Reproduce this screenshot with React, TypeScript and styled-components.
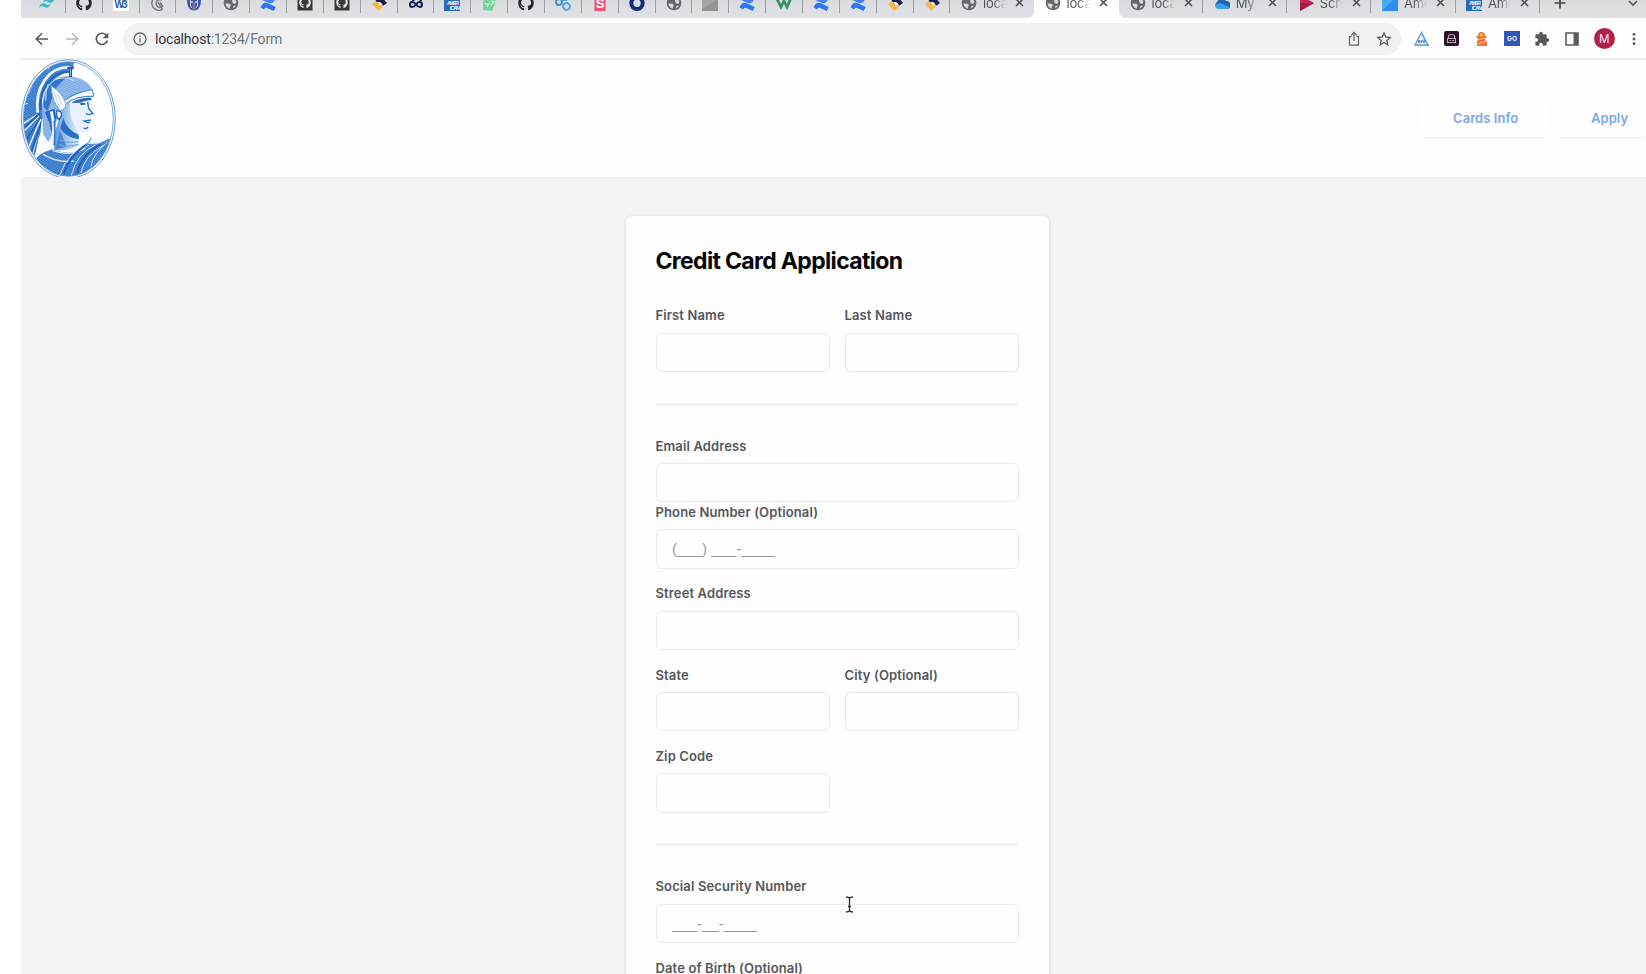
import React from 'react';
import styled, { createGlobalStyle, css } from 'styled-components';
import { FaGithub } from 'react-icons/fa';

const GlobalStyle = createGlobalStyle`
  * { box-sizing: border-box; }
  body { margin: 0; background: #fff; overflow: hidden; }
`;

const Window = styled.div`
  position: relative;
  width: 1646px;
  height: 974px;
  padding-left: 21px;
  display: flex;
  flex-direction: column;
  overflow: hidden;
  background: #fff;
  font-family: Inter, 'Liberation Sans', sans-serif;
`;

/* ---------- browser chrome ---------- */

const TabStrip = styled.div`
  display: flex;
  height: 18px;
  flex: none;
  background: #fdfdfe;
`;

const TabGroup = styled.div<{ $side: 'left' | 'right' }>`
  display: flex;
  align-items: flex-end;
  height: 18px;
  overflow: hidden;
  background: linear-gradient(#d9dbdf, #e0e1e5);
  ${(p) =>
    p.$side === 'left'
      ? css`width: 1013px; padding-left: 8px; border-bottom-right-radius: 7px;`
      : css`flex: 1; border-bottom-left-radius: 7px;`}
`;

const ActiveSlot = styled.div`
  display: flex;
  align-items: flex-end;
  height: 18px;
  width: 85px;
  overflow: hidden;
`;

const TabBase = styled.div<{ $divider?: boolean }>`
  display: flex;
  align-items: center;
  flex: none;
  height: 31px;
  &::after {
    content: '';
    width: 1px;
    height: 20px;
    margin-left: auto;
    background: ${(p) => (p.$divider === false ? 'transparent' : '#9b9ea3')};
  }
`;

const PinnedTab = styled(TabBase)`
  width: 36.87px;
  padding-left: 10px;
`;

const WideTab = styled(TabBase)`
  width: 84.15px;
  padding-left: 10.5px;
`;

const TabTitle = styled.span`
  width: 24px;
  margin-left: 6px;
  overflow: hidden;
  white-space: nowrap;
  font: 400 13px/18px Inter, sans-serif;
  letter-spacing: -0.2px;
  color: #55585c;
  mask-image: linear-gradient(90deg, #000 45%, transparent 95%);
`;

const CloseIcon = styled.svg`
  width: 9px;
  height: 9px;
  margin-left: 8px;
`;

const NewTab = styled.div`
  display: flex;
  flex: 1;
  height: 31px;
  align-items: center;
  justify-content: space-between;
  padding: 0 8px 0 14px;
`;

const Toolbar = styled.div`
  display: flex;
  align-items: center;
  height: 42px;
  flex: none;
  padding: 1px 6px 0 13px;
  border-bottom: 2px solid #ebecee;
  background: #fdfdfe;
`;

const NavIcons = styled.div`
  display: flex;
  align-items: center;
  gap: 14px;
  width: 89px;
  svg { width: 16px; height: 16px; flex: none; }
`;

const AddressBar = styled.div`
  display: flex;
  align-items: center;
  width: 1278px;
  height: 32px;
  padding: 0 9px 0 10px;
  border-radius: 16px;
  background: #f0f1f3;
`;

const Url = styled.span`
  flex: 1;
  margin-left: 8px;
  font: 400 14px/20px Roboto, sans-serif;
  letter-spacing: -0.18px;
  color: #707377;
  b { font-weight: 400; color: #313438; }
`;

const BarActions = styled.div`
  display: flex;
  align-items: center;
  gap: 14px;
`;

const Extensions = styled.div`
  display: flex;
  align-items: center;
  flex: 1;
  gap: 14.7px;
  padding-left: 12.5px;
  svg { flex: none; }
`;

const Avatar = styled.div`
  display: grid;
  place-items: center;
  width: 21px;
  height: 21px;
  border-radius: 50%;
  background: #b0214d;
  color: #f7dfe7;
  font: 400 12px/1 Roboto, sans-serif;
`;

/* ---------- site ---------- */

const SiteHeader = styled.header`
  display: flex;
  justify-content: space-between;
  height: 117px;
  flex: none;
  background: #fdfdfd;
`;

const Crest = styled.svg`
  width: 98px;
  height: 120px;
  margin: -1.5px 0 0 -1px;
  flex: none;
`;

const Nav = styled.nav`
  display: flex;
  align-items: center;
  gap: 10px;
  height: 117px;
`;

const NavButton = styled.button<{ $w: number }>`
  width: ${(p) => p.$w}px;
  height: 36px;
  padding: 0 0 2px 33px;
  border: 0;
  border-radius: 4px;
  text-align: left;
  background: #fefefe;
  box-shadow: 0 1px 2px rgba(0, 0, 0, 0.035);
  color: #7aa6e9;
  font: 600 13px/18px Inter, sans-serif;
  letter-spacing: 0.05px;
`;

const Page = styled.main`
  flex: 1;
  min-height: 0;
  display: flex;
  justify-content: center;
  align-items: flex-start;
  padding: 39px 0 0 7px;
  background: #f1f3f5;
`;

const Card = styled.form`
  width: 423px;
  height: 1100px;
  flex: none;
  padding: 30px 30px 0;
  border-radius: 6px;
  background: #fdfdfe;
  box-shadow: 0 1px 4px rgba(0, 0, 0, 0.12);
`;

const Title = styled.h1`
  margin: 0 0 31.3px;
  color: #050505;
  font: 700 23px/30px Inter, sans-serif;
  letter-spacing: -0.66px;
  white-space: nowrap;
`;

const Row = styled.div<{ $after?: number }>`
  display: grid;
  grid-template-columns: 1fr 1fr;
  column-gap: 15px;
  margin-bottom: ${(p) => p.$after ?? 16.7}px;
`;

const Field = styled.label<{ $full?: boolean }>`
  display: flex;
  flex-direction: column;
  grid-column: ${(p) => (p.$full ? '1 / -1' : 'auto')};
`;

const LabelText = styled.span`
  height: 17px;
  margin-bottom: 8.4px;
  color: #55575b;
  font: 600 13px/17px Inter, sans-serif;
  letter-spacing: 0.13px;
  white-space: nowrap;
`;

const Input = styled.input`
  width: 100%;
  height: 39.3px;
  padding: 0 15.5px;
  border: 1px solid #e9eaeb;
  border-radius: 6px;
  outline: none;
  background: #fefefe;
  font: 400 15px/20px 'Liberation Sans', sans-serif;
  &::placeholder { color: #96989a; opacity: 1; }
`;

const Divider = styled.hr`
  height: 3px;
  margin: 0 0 32px;
  border: 0;
  border-radius: 2px;
  background: #f1f1f2;
`;

const TextCursor = styled.svg`
  position: absolute;
  left: 845px;
  top: 896px;
  width: 9px;
  height: 17px;
`;

/* ---------- icons ---------- */

const icons: Record<string, React.ReactNode> = {
  wave: (
    <g fill="#35b8cb">
      <path d="M4 7.500Q6 2.500 9.500 3.500C12 4.500 13 6.500 16 3 14 8.500 11.500 8 10 7.300 7.500 6 6.500 5.500 4 7.500z" />
      <path d="M0 12.500Q2 7.500 5.500 8.500C8 9.500 9 11.500 12 8 10 13.500 7.500 13 6 12.300 3.500 11 2.500 10.500 0 12.500z" />
    </g>
  ),
  github: <FaGithub size={16} color="#25282c" />,
  w3: (
    <g>
      <rect width="16" height="16" fill="#fbfcfe" />
      <text x="8" y="12.500" textAnchor="middle" fontFamily="Liberation Sans" fontSize="10" fontWeight="700" fill="#275f9e" textLength="13">W3</text>
    </g>
  ),
  swirl: (
    <g fill="none" stroke="#777b80" strokeWidth="1.500">
      <path d="M12 2A7 7 0 1 0 13 14" />
      <path d="M12 5A4 4 0 1 0 12 12" />
      <path d="M8 7l4 7M10 7l3 5" />
    </g>
  ),
  elephant: (
    <g>
      <path d="M1 5Q1 0 8 1t7 4q0 5-2 8l-2 2H5l-2-2Q1 10 1 5z" fill="#3b55ad" />
      <path d="M4.500 4v7l1.500 2M11.500 4v7L10 13" stroke="#c9d2ed" fill="none" />
      <path d="M7 7h2l1 8.500H6z" fill="#77777f" />
      <path d="M5 7h2M9 7h2" stroke="#fff" />
    </g>
  ),
  globe: (
    <g>
      <circle cx="8" cy="8" r="7.300" fill="#65696d" />
      <path d="M2.500 8.500l4 .2 1.500 1.500-1 1.300-.3 2.200C4.500 13 2.800 11.500 2.500 8.500z" fill="#d8dadd" />
      <path d="M9 4c2.500 0 4 1.200 4.500 3L12 9 9.500 8z" fill="#d8dadd" />
      <path d="M10.500 11l2.500-.5-1.500 2-1.500.5z" fill="#d8dadd" />
    </g>
  ),
  confluence: (
    <g>
      <path d="M.5 12.300C3 7.500 5 6.800 9 8.800l6.700 3.100-2 4.100-6-2.800c-2-.9-2.700-.5-3.600 1.300z" fill="#2f75ef" />
      <path d="M15.500 3.700C13 8.500 11 9.200 7 7.200L.3 4.100 2.300 0l6 2.800c2 .9 2.700.5 3.600-1.300z" fill="#3f83f8" />
    </g>
  ),
  darkhub: (
    <g>
      <rect x=".5" width="15" height="15.500" fill="#35383b" />
      <FaGithub x={2} y={1.500} size={12} color="#e0e1e3" />
    </g>
  ),
  diamond: (
    <g>
      <path d="M1 9l5-4 8 4-6.500 7z" fill="#f3b847" />
      <path d="M3 3l6-3 7 8-3.500 2.500L10 8l-2 2z" fill="#16204d" />
      <path d="M6 7l3 0 2 2-2 2z" fill="#fff" />
    </g>
  ),
  infinity: (
    <path d="M8 9.500C5.500 6 2 6.500 2 9.500s3.500 3.500 6 0 6-3 6 0-3.500 3.500-6 0M5 6c1-3 7-4 8 0" fill="none" stroke="#151c50" strokeWidth="2.100" />
  ),
  amex: (
    <g>
      <rect width="16" height="16" fill="#286bb8" />
      <text x="9" y="10" textAnchor="middle" fontFamily="Liberation Sans" fontWeight="700" fontSize="5.500" fill="#eef5ff" textLength="12">AMER</text>
      <text x="11" y="14.500" textAnchor="middle" fontFamily="Liberation Sans" fontWeight="700" fontSize="5.500" fill="#eef5ff" textLength="10">ICAN</text>
    </g>
  ),
  leaf: (
    <g>
      <path d="M4 0h11l-1 9-3 7-9-1 0-8z" fill="#73d795" />
      <path d="M4 9h4l-2 3M10 6l3 1-3 3" fill="none" stroke="#ddf6e4" strokeWidth="1.100" />
    </g>
  ),
  loops: (
    <g fill="none" strokeWidth="2">
      <circle cx="4" cy="7" r="3" stroke="#4b8dc8" />
      <circle cx="11.500" cy="11.500" r="3.400" stroke="#57a6dc" />
      <path d="M6.500 8L9 10M7 5h5" stroke="#57a6dc" />
    </g>
  ),
  story: (
    <g>
      <path d="M2.500 0h11v16h-11z" fill="#e5527b" />
      <text x="8" y="13" textAnchor="middle" fontFamily="Liberation Sans" fontSize="13" fontWeight="700" fill="#fff">S</text>
    </g>
  ),
  ring: <circle cx="8" cy="8.200" r="5.700" fill="none" stroke="#142d79" strokeWidth="4" />,
  gray: (
    <g>
      <rect width="16" height="16" fill="#929497" />
      <path d="M0 0h16v4L0 14z" fill="#a4a5a8" />
    </g>
  ),
  w: <path d="M1 4l4 8 3-6 3 6 4-9" fill="none" stroke="#34915d" strokeWidth="2.700" />,
  cloud: (
    <g>
      <path d="M4 14a4 4 0 0 1-1-7 5 5 0 0 1 9-1 4 4 0 0 1 1 8z" fill="#1d67bd" />
      <path d="M1 10l5-2 9 4q0 2-3 2H4q-3-1-3-4z" fill="#3ba0e8" />
    </g>
  ),
  play: (
    <g>
      <path d="M2 0l14 8L2 16z" fill="#c22752" />
      <path d="M2 8h14L2 16z" fill="#a41c43" />
    </g>
  ),
  blue: (
    <g>
      <rect width="16" height="16" fill="#2f8bf4" />
      <path d="M0 0h16L0 16z" fill="#49aaf9" />
    </g>
  ),
};

const Favicon = ({ name }: { name: string }) => (
  <svg width="16" height="16" viewBox="0 0 16 16">{icons[name]}</svg>
);

const Close = () => (
  <CloseIcon viewBox="0 0 9 9">
    <path d="M1 1l7 7M8 1L1 8" stroke="#484b4f" strokeWidth="1.500" />
  </CloseIcon>
);

const pinned = [
  'wave', 'github', 'w3', 'swirl', 'elephant', 'globe', 'confluence', 'darkhub', 'darkhub',
  'diamond', 'infinity', 'amex', 'leaf', 'github', 'loops', 'story', 'ring', 'globe', 'gray',
  'confluence', 'w', 'confluence', 'confluence', 'diamond', 'diamond',
];

const Tab = ({ icon, title, divider }: { icon: string; title: string; divider?: boolean }) => (
  <WideTab $divider={divider}>
    <Favicon name={icon} />
    <TabTitle>{title}</TabTitle>
    <Close />
  </WideTab>
);

const CenturionCrest = () => (
  <Crest viewBox="33 25 294 360">
    <defs>
      <clipPath id="oval"><ellipse cx="178" cy="205" rx="134" ry="171" /></clipPath>
      <pattern id="hatch" width="6" height="6" patternUnits="userSpaceOnUse" patternTransform="rotate(35)">
        <rect width="6" height="6" fill="#2f74ca" />
        <path d="M0 1h6" stroke="#8db8e8" strokeWidth="1.500" />
      </pattern>
      <pattern id="shade" width="5" height="5" patternUnits="userSpaceOnUse" patternTransform="rotate(-20)">
        <rect width="5" height="5" fill="#b4d0f0" />
        <path d="M0 2h5" stroke="#4a8ad6" strokeWidth="2" />
      </pattern>
      <linearGradient id="cheek" x1="0" x2="1" y1="0" y2="0">
        <stop offset="0" stopColor="#5c98de" />
        <stop offset="1" stopColor="#f2f8fe" />
      </linearGradient>
    </defs>
    <ellipse cx="178" cy="205" rx="141" ry="178" fill="#fdfeff" stroke="#4b86cd" strokeWidth="2.500" />
    <ellipse cx="178" cy="205" rx="135" ry="172" fill="none" stroke="#78a8df" strokeWidth="3" />
    <g clipPath="url(#oval)">
      <path d="M196 30C95 25 38 115 38 214l4 85 35 22 12-58 21-55-13-63q18-62 94-88z" fill="url(#hatch)" />
      <path d="M100 62L90 76M68 107L58 130M57 159L44 160M126 42l-9 14" stroke="#d3e4f6" strokeWidth="3" />
      <path d="M185 50C118 46 77 111 86 186" fill="none" stroke="#f5faff" strokeWidth="8" />
      <path d="M181 63C125 64 93 112 94 178" fill="none" stroke="#2467b6" strokeWidth="6" />
      <path d="M88 190L44 218M90 195L42 245M92 199L47 274M95 204L57 295M98 208L70 312" stroke="#f5faff" strokeWidth="4" />
      <path d="M93 188L47 230M94 199L52 267M100 207L67 306" stroke="#1e62b6" strokeWidth="6" />
      <path d="M98 205l22 0-5 42q-2 30 17 52l-33 7-26 12q24-28 21-63z" fill="#f8fcff" />
      <path d="M100 190C97 105 133 77 179 76q61 8 71 44l-65 20-32 38-20 67-15 30-16-25z" fill="url(#shade)" />
      <path d="M104 170C104 108 135 80 178 78q-40 22-52 74l-10 30z" fill="#3277cd" />
      <path d="M118 100q-10 22-8 50M138 86q31-10 58 4" fill="none" stroke="#cfe2f6" strokeWidth="3" />
      <path d="M177 48h19v4l-7 4v23h-9V56l-7-4z" fill="#225fae" />
      <path d="M184 56v20" stroke="#c8ddf3" strokeWidth="2" />
      {/* face in profile, neck and jaw shadow */}
      <path d="M165 150l30-10 52-2 1 17 1 12 7 22q0 4-9 5l-1 11 1 5-4 6 1 10q-2 15-15 18l-22 2 4 40q-30 16-78 10l8-62 9-40z" fill="#e9f2fc" />
      <path d="M163 158l22-14q-8 42 9 76l22 26-9 4 4 36q-30 16-76 12l5-60z" fill="url(#cheek)" />
      <path d="M163 202q8 34 46 50l1 14q-38-4-56-33z" fill="#2b6dc2" />
      <path d="M152 240l22 48-34 8z" fill="#4685cf" />
      <path d="M154 268q26 12 54 4M150 282q30 10 60-2" fill="none" stroke="#6fa4e0" strokeWidth="4" />
      <path d="M163 151q38-27 87-34l4 20q-52-3-84 23z" fill="#f3f9ff" stroke="#3c7ac7" strokeWidth="3" />
      <path d="M180 119q26-14 56-10l8 9q-40 4-70 20z" fill="url(#shade)" />
      <path d="M192 153q24-13 54-12l2 7-16 2-20 6-24 1z" fill="#2a68b8" />
      <path d="M212 158q10-4 20 3l-16 3z" fill="#2463b2" />
      <path d="M236 154l3 20 13 15-14 3-8-3M246 208l-21 3 10 5 8-1M224 232q8 4 13-3" fill="none" stroke="#2d6dbd" strokeWidth="4" />
      {/* wing and cheek guard */}
      <path d="M126 105q31 19 45 53-1 19-17 22-25-26-28-75z" fill="#f7fbff" stroke="#70a5df" strokeWidth="3" />
      <path d="M135 124l17 46M146 130l15 36" stroke="#bad5ef" strokeWidth="3" />
      <path d="M107 184l29-10 6 30-15 42-6-30z" fill="#296bbf" />
      <path d="M143 181q15-3 15 13l-7 13q-11-6-8-26z" fill="#e5f1fc" stroke="#2768b4" strokeWidth="4" />
      <path d="M127 182q12 49 3 100" fill="none" stroke="#e4f0fc" strokeWidth="9" />
      <path d="M136 210q4 40 0 74" fill="none" stroke="#3275c8" strokeWidth="5" />
      {/* cloak */}
      <path d="M70 338q16-30 60-42 52 20 90 0l50-30 46-2-12 51-41 62-78 16-65-20z" fill="url(#hatch)" />
      <path d="M130 299q51 20 98-6M103 311q43 27 91 20" fill="none" stroke="#d4e7fa" strokeWidth="4" />
      <path d="M249 274q-73 27-96 98M266 279q-64 28-79 95M283 284q-59 34-67 83M296 274q-46 38-50 73" fill="none" stroke="#cce1f8" strokeWidth="3" />
      <path d="M254 271q-66 29-90 98M276 280q-57 30-72 88" fill="none" stroke="#1e62b5" strokeWidth="6" />
      <path d="M246 262q-4 14-14 20l36-2 32-14" fill="#eff7ff" stroke="#478bd2" strokeWidth="3" />
    </g>
  </Crest>
);

export default function App() {
  return (
    <Window>
      <GlobalStyle />
      <TabStrip>
        <TabGroup $side="left">
          {pinned.map((name, i) => (
            <PinnedTab key={i}><Favicon name={name} /></PinnedTab>
          ))}
          <Tab icon="globe" title="localhost" divider={false} />
        </TabGroup>
        <ActiveSlot><Tab icon="globe" title="localhost" divider={false} /></ActiveSlot>
        <TabGroup $side="right">
          <Tab icon="globe" title="localhost" />
          <Tab icon="cloud" title="My" />
          <Tab icon="play" title="Scree" />
          <Tab icon="blue" title="Amer" />
          <Tab icon="amex" title="Amer" />
          <NewTab>
            <svg width="12" height="12" viewBox="0 0 12 12"><path d="M6 .5v11M.5 6h11" stroke="#414447" strokeWidth="1.700" /></svg>
            <svg width="10" height="10" viewBox="0 0 10 10"><path d="M1 3l4 4 4-4" stroke="#55585c" strokeWidth="1.600" fill="none" /></svg>
          </NewTab>
        </TabGroup>
      </TabStrip>

      <Toolbar>
        <NavIcons>
          <svg viewBox="0 0 16 16"><path d="M14 8H2.500M8 2.300L2.300 8 8 13.700" stroke="#55585c" strokeWidth="1.600" fill="none" /></svg>
          <svg viewBox="0 0 16 16"><path d="M2 8h11.500M8 2.300L13.700 8 8 13.700" stroke="#b5b7ba" strokeWidth="1.500" fill="none" /></svg>
          <svg viewBox="0 0 16 16"><path d="M13.300 9.500A5.600 5.600 0 1 1 12 4l1.500 1.600" stroke="#55585c" strokeWidth="1.700" fill="none" /><path d="M14.300 1.500v5.700H8.600z" fill="#55585c" /></svg>
        </NavIcons>
        <AddressBar>
          <svg width="14" height="14" viewBox="0 0 14 14"><circle cx="7" cy="7" r="6" fill="none" stroke="#65686c" strokeWidth="1.300" /><path d="M7 6.200v4M7 3.500v1.400" stroke="#65686c" strokeWidth="1.400" /></svg>
          <Url><b>localhost</b>:1234/Form</Url>
          <BarActions>
            <svg width="16" height="16" viewBox="0 0 16 16"><path d="M5.500 5.700H3.500v8.500h9V5.700h-2M8 10V1.800M5.200 4.300L8 1.500l2.800 2.800" fill="none" stroke="#66696d" strokeWidth="1.300" /></svg>
            <svg width="16" height="16" viewBox="0 0 16 16"><path d="M8 2l1.800 4 4.400.5-3.300 2.900.9 4.300L8 11.500l-3.800 2.200.9-4.300L1.800 6.500 6.200 6z" fill="none" stroke="#55585c" strokeWidth="1.300" /></svg>
          </BarActions>
        </AddressBar>
        <Extensions>
          <svg width="16" height="16" viewBox="0 0 16 16"><path d="M7.500 1.500L1 14h13z" fill="#f6fafe" stroke="#5796d1" strokeWidth="1.300" /><path d="M7.500 4l4.500 8" stroke="#8ab6e0" /><path d="M4 10.500h7" stroke="#427fbb" strokeWidth="2.500" strokeDasharray="2 .6" /><circle cx="14" cy="14" r="1" fill="#5796d1" /></svg>
          <svg width="15" height="15" viewBox="0 0 15 15"><rect width="15" height="15" rx="2" fill="#291027" /><path d="M4.500 7V5q0-1.500 3-1.500t3 1.500v2M3.500 7.500h8v4h-8zM5.500 9.500h1.500M8 9.500h2" fill="none" stroke="#bda7bc" strokeWidth="1.100" /></svg>
          <svg width="15" height="16" viewBox="0 0 15 16"><path d="M4 5Q4 1 7.500 1T11 5h1.500v2H11l.5 3 1.500 1v4H3v-4l1-4H2.500V5z" fill="#ed7138" /><path d="M3.500 13l9-3M4 9l7-2" stroke="#f9bd86" strokeWidth="1.200" /><circle cx="7.500" cy="4" r="1.500" fill="#f7d36e" /></svg>
          <svg width="16" height="15" viewBox="0 0 16 15"><rect width="16" height="15" fill="#2f58b9" /><text x="8" y="9.700" textAnchor="middle" fontFamily="Inter" fontSize="6.500" fontWeight="700" fill="#e8effc">GO</text></svg>
          <svg width="16" height="16" viewBox="0 0 24 24"><path fill="#56595d" d="M20.500 11H19V7a2 2 0 0 0-2-2h-4V3.500a2.500 2.500 0 0 0-5 0V5H4a2 2 0 0 0-2 2v3.800h1.500a2.700 2.700 0 0 1 0 5.400H2V20a2 2 0 0 0 2 2h3.800v-1.500a2.700 2.700 0 0 1 5.400 0V22H17a2 2 0 0 0 2-2v-4h1.500a2.500 2.500 0 0 0 0-5z" /></svg>
          <svg width="14" height="14" viewBox="0 0 14 14"><path d="M1 1h12v12H1z" fill="#fff" stroke="#5a5d61" strokeWidth="1.600" /><path d="M8.500 1H13v12H8.500z" fill="#5a5d61" /></svg>
          <Avatar>M</Avatar>
          <svg width="10" height="14" viewBox="0 0 10 14" fill="#55585c"><circle cx="5" cy="2.300" r="1.400" /><circle cx="5" cy="7" r="1.400" /><circle cx="5" cy="11.700" r="1.400" /></svg>
        </Extensions>
      </Toolbar>

      <SiteHeader>
        <CenturionCrest />
        <Nav>
          <NavButton $w={128}>Cards Info</NavButton>
          <NavButton $w={88}>Apply</NavButton>
        </Nav>
      </SiteHeader>

      <Page>
        <Card>
          <Title>Credit Card Application</Title>
          <Row $after={30.6}>
            <Field><LabelText>First Name</LabelText><Input /></Field>
            <Field><LabelText>Last Name</LabelText><Input /></Field>
          </Row>
          <Divider />
          <Row $after={1.6}>
            <Field $full><LabelText>Email Address</LabelText><Input /></Field>
          </Row>
          <Row>
            <Field $full><LabelText>Phone Number (Optional)</LabelText><Input placeholder="(___) ___-____" /></Field>
          </Row>
          <Row>
            <Field $full><LabelText>Street Address</LabelText><Input /></Field>
          </Row>
          <Row>
            <Field><LabelText>State</LabelText><Input /></Field>
            <Field><LabelText>City (Optional)</LabelText><Input /></Field>
          </Row>
          <Row $after={30.6}>
            <Field><LabelText>Zip Code</LabelText><Input /></Field>
          </Row>
          <Divider />
          <Row>
            <Field $full><LabelText>Social Security Number</LabelText><Input placeholder="___-__-____" /></Field>
          </Row>
          <Row>
            <Field $full><LabelText>Date of Birth (Optional)</LabelText><Input /></Field>
          </Row>
        </Card>
      </Page>

      <TextCursor viewBox="0 0 9 17">
        <path d="M1 1q3 0 3.500 1.500Q5 1 8 1M4.500 2v13M1 16q3 0 3.500-1.500Q5 16 8 16M3 10.500h3" fill="none" stroke="#333639" strokeWidth="1.300" />
      </TextCursor>
    </Window>
  );
}
